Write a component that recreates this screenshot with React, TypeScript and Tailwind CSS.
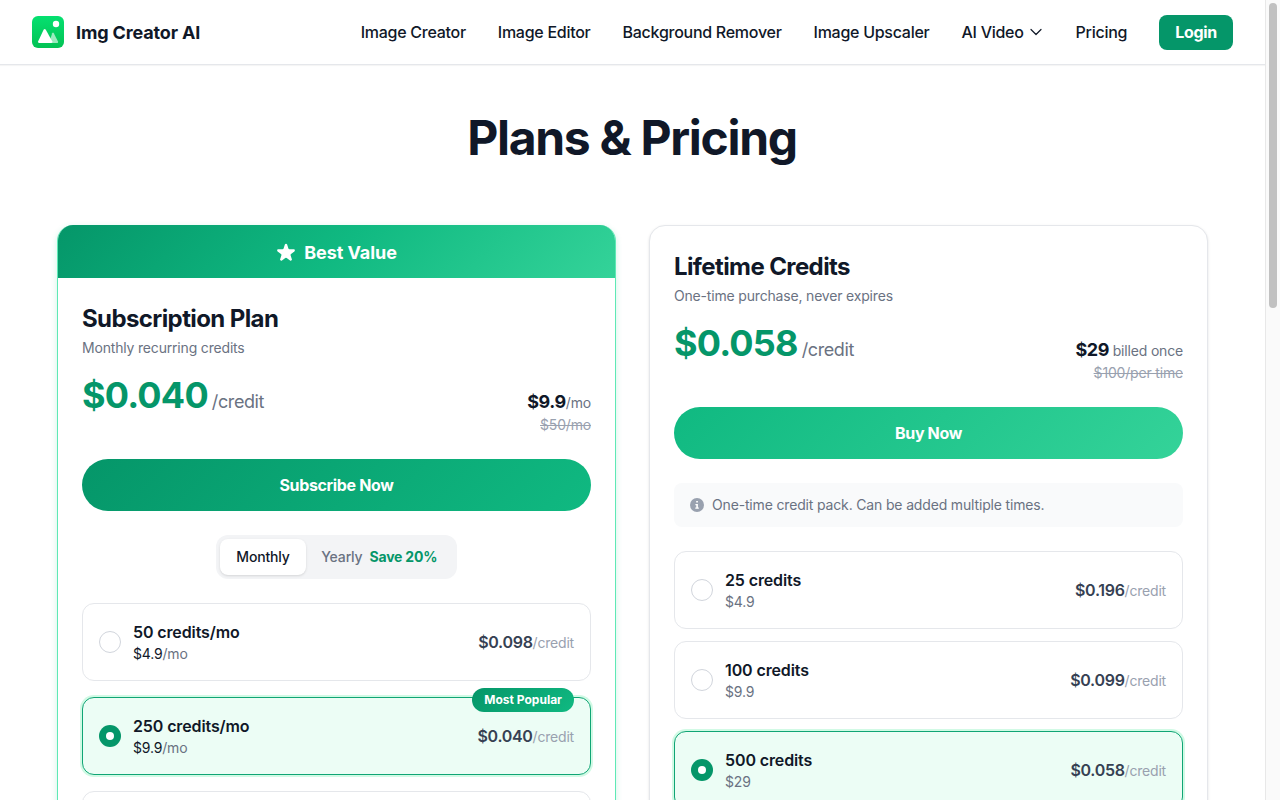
import { useState } from "react";

type Option = {
  credits: string;
  price: string;
  unit?: string;
  perCredit: string;
  popular?: boolean;
};

const NAV_LINKS = ["Image Creator", "Image Editor", "Background Remover", "Image Upscaler"];

const SUBSCRIPTION_OPTIONS: Option[] = [
  { credits: "50 credits/mo", price: "$4.9", unit: "/mo", perCredit: "$0.098" },
  { credits: "250 credits/mo", price: "$9.9", unit: "/mo", perCredit: "$0.040", popular: true },
];

const LIFETIME_OPTIONS: Option[] = [
  { credits: "25 credits", price: "$4.9", perCredit: "$0.196" },
  { credits: "100 credits", price: "$9.9", perCredit: "$0.099" },
  { credits: "500 credits", price: "$29", perCredit: "$0.058" },
];

export default function App() {
  return (
    <div className="flex h-screen overflow-hidden bg-white font-['Inter',sans-serif] text-gray-900">
      <div className="h-full min-w-0 flex-1 overflow-hidden">
        <Header />
        <main className="mx-auto max-w-[1151px]">
          <h1 className="pt-[43px] pr-px text-center text-5xl leading-[60px] font-bold tracking-[-1.3px]">
            Plans &amp; Pricing
          </h1>
          <div className="mt-[57px] grid grid-cols-2 items-start gap-[33px]">
            <SubscriptionCard />
            <LifetimeCard />
          </div>
        </main>
      </div>
      <div className="flex w-[15px] shrink-0 justify-center border-l border-[#e8e8e8] bg-[#fafafa] pt-[3px]">
        <div className="h-[305px] w-2 rounded-full bg-[#c1c1c1]" />
      </div>
    </div>
  );
}

function Header() {
  return (
    <header className="flex h-[65px] items-center justify-between border-b border-gray-200 px-8 shadow-[0_1px_1px_rgba(0,0,0,0.04)]">
      <div className="flex items-center gap-3">
        <Logo />
        <span className="pt-px text-lg font-bold tracking-[-0.15px]">Img Creator AI</span>
      </div>
      <nav className="flex items-center gap-8 text-base font-medium tracking-[-0.27px]">
        {NAV_LINKS.map((label) => (
          <a key={label} href="#">
            {label}
          </a>
        ))}
        <a href="#" className="flex items-center gap-1">
          AI Video
          <svg className="size-4" viewBox="0 0 16 16" fill="none" stroke="currentColor" strokeWidth="1.2">
            <path d="M3 5.5l5 5 5-5" strokeLinecap="round" strokeLinejoin="round" />
          </svg>
        </a>
        <a href="#">Pricing</a>
        <button className="h-[35px] rounded-lg bg-[#059669] px-4 font-bold tracking-[-0.3px] text-white">Login</button>
      </nav>
    </header>
  );
}

function Logo() {
  return (
    <svg className="size-8" viewBox="0 0 32 32">
      <defs>
        <linearGradient id="logo-bg" x1="0" y1="0" x2="0" y2="1">
          <stop offset="0" stopColor="#05e070" />
          <stop offset="1" stopColor="#03c254" />
        </linearGradient>
      </defs>
      <rect width="32" height="32" rx="6" fill="url(#logo-bg)" />
      <circle cx="24" cy="8" r="3.2" fill="#fff" />
      <path
        d="M20.2 17.2q.8-1.2 1.6 0l4.2 8.2q.6 1.6-1 1.6H17z"
        fill="#fff"
        fillOpacity="0.6"
      />
      <path d="M11.6 13.8q1.1-1.6 2.2 0l6.4 11.4q.7 1.8-1 1.8H7.2q-1.8 0-1-1.8z" fill="#fff" />
    </svg>
  );
}

function SubscriptionCard() {
  const [yearly, setYearly] = useState(false);
  const [selected, setSelected] = useState(1);

  return (
    <section className="overflow-hidden rounded-2xl border border-t-0 border-emerald-300 bg-white shadow-[0_2px_6px_rgba(16,185,129,0.2)]">
      <div className="flex h-[53px] items-center justify-center gap-2 bg-linear-[135deg,#059669_0%,#10b981_50%,#34d399_100%] pt-0.5 text-lg font-bold tracking-[-0.05px] text-white">
        <svg className="size-5" viewBox="1.6 1.6 16.8 16.8" fill="currentColor">
          <path d="M9.049 2.927c.3-.921 1.603-.921 1.902 0l1.07 3.292a1 1 0 00.95.69h3.462c.969 0 1.371 1.24.588 1.81l-2.8 2.034a1 1 0 00-.364 1.118l1.07 3.292c.3.921-.755 1.688-1.54 1.118l-2.8-2.034a1 1 0 00-1.175 0l-2.8 2.034c-.784.57-1.838-.197-1.539-1.118l1.07-3.292a1 1 0 00-.364-1.118L2.98 8.72c-.783-.57-.38-1.81.588-1.81h3.461a1 1 0 00.951-.69l1.07-3.292z" />
        </svg>
        Best Value
      </div>
      <div className="p-6">
        <PlanHeading
          title="Subscription Plan"
          subtitle="Monthly recurring credits"
          perCredit="$0.040"
          price="$9.9"
          unit="/mo"
          oldPrice="$50/mo"
        />
        <button className="mt-6 h-[52px] w-full rounded-full bg-linear-[135deg,#059669,#10b981] font-bold tracking-[-0.35px] text-white">
          Subscribe Now
        </button>
        <div className="mt-6 flex justify-center">
          <div className="flex rounded-xl bg-gray-100 p-1 text-sm font-medium tracking-[-0.15px]">
            <button
              onClick={() => setYearly(false)}
              className={yearly ? "h-9 px-4 text-gray-500" : "h-9 rounded-lg bg-white px-4 text-gray-900 shadow-sm"}
            >
              Monthly
            </button>
            <button
              onClick={() => setYearly(true)}
              className={yearly ? "h-9 rounded-lg bg-white px-4 text-gray-900 shadow-sm" : "h-9 px-[15.5px] text-gray-500"}
            >
              Yearly
              <span className="ml-[7px] font-bold tracking-[-0.2px] text-[#059669]">Save 20%</span>
            </button>
          </div>
        </div>
        <div className="mt-6 flex flex-col gap-4">
          {SUBSCRIPTION_OPTIONS.map((o, i) => (
            <OptionRow key={o.credits} option={o} active={i === selected} onSelect={() => setSelected(i)} />
          ))}
          <div className="h-[78px] rounded-xl border border-gray-200 bg-white" />
        </div>
      </div>
    </section>
  );
}

function LifetimeCard() {
  const [selected, setSelected] = useState(2);

  return (
    <section className="rounded-2xl border border-gray-200 bg-white p-6 shadow-sm">
      <PlanHeading
        title="Lifetime Credits"
        subtitle="One-time purchase, never expires"
        perCredit="$0.058"
        price="$29"
        unit=" billed once"
        oldPrice="$100/per time"
      />
      <button className="mt-6 h-[52px] w-full rounded-full bg-linear-[135deg,#10b981,#34d399] font-bold tracking-[-0.35px] text-white">
        Buy Now
      </button>
      <div className="mt-6 flex items-center gap-[7px] rounded-lg bg-[#f9fafb] px-[15px] py-3 text-sm tracking-[-0.16px] text-gray-500">
        <svg className="size-4 text-gray-400" viewBox="0 0 16 16">
          <circle cx="8" cy="8" r="7" fill="currentColor" />
          <path d="M7.2 4h1.7v1.6H7.2zM6.4 7h2.5v3.6h.9v1.2H6.3v-1.2h1V8.2h-.9z" fill="#fff" />
        </svg>
        One-time credit pack. Can be added multiple times.
      </div>
      <div className="mt-6 flex flex-col gap-3">
        {LIFETIME_OPTIONS.map((o, i) => (
          <OptionRow key={o.credits} option={o} active={i === selected} onSelect={() => setSelected(i)} />
        ))}
      </div>
    </section>
  );
}

function PlanHeading({
  title,
  subtitle,
  perCredit,
  price,
  unit,
  oldPrice,
}: {
  title: string;
  subtitle: string;
  perCredit: string;
  price: string;
  unit: string;
  oldPrice: string;
}) {
  return (
    <>
      <h2 className="pt-px text-2xl font-bold tracking-[-0.6px]">{title}</h2>
      <p className="mt-[3px] text-sm tracking-[-0.18px] text-gray-500">{subtitle}</p>
      <div className="mt-[17px] flex h-[60px] items-baseline justify-between">
        <div className="flex items-baseline gap-1">
          <span className="text-4xl font-bold tracking-[-0.8px] text-[#059669]">{perCredit}</span>
          <span className="text-lg tracking-[-0.4px] text-gray-500">/credit</span>
        </div>
        <div className="text-right">
          <div className="text-lg leading-[26px] font-bold tracking-[-0.45px] whitespace-pre">
            {price}
            <span className="text-sm font-normal tracking-[-0.18px] text-gray-500">{unit}</span>
          </div>
          <div className="text-sm tracking-[-0.18px] text-gray-400 line-through">{oldPrice}</div>
        </div>
      </div>
    </>
  );
}

function OptionRow({ option, active, onSelect }: { option: Option; active: boolean; onSelect: () => void }) {
  return (
    <div
      onClick={onSelect}
      className={
        active
          ? "relative flex h-[78px] items-center rounded-xl border border-[#10a575] bg-[#ecfdf5] px-4 shadow-[0_0_0_2px_#d1fae5]"
          : "relative flex h-[78px] items-center rounded-xl border border-gray-200 bg-white px-4"
      }
    >
      {option.popular && (
        <span className="absolute -top-2.5 right-4 rounded-full bg-linear-[135deg,#059669,#10b981] px-3 py-1 text-xs font-bold text-white">
          Most Popular
        </span>
      )}
      {active ? (
        <span className="flex size-[22px] items-center justify-center rounded-full bg-[#059669]">
          <span className="size-2 rounded-full bg-white" />
        </span>
      ) : (
        <span className="size-[22px] rounded-full border border-gray-300 bg-white" />
      )}
      <div className="ml-3 flex-1">
        <div className="text-base font-semibold tracking-[-0.12px]">{option.credits}</div>
        {option.unit ? (
          <div className="text-sm tracking-[-0.18px]">
            {option.price}
            <span className="text-gray-500">{option.unit}</span>
          </div>
        ) : (
          <div className="text-sm tracking-[-0.18px] text-gray-500">{option.price}</div>
        )}
      </div>
      <div className="text-base font-semibold tracking-[-0.3px] text-gray-700">
        {option.perCredit}
        <span className="text-sm font-normal tracking-[-0.2px] text-gray-400">/credit</span>
      </div>
    </div>
  );
}
